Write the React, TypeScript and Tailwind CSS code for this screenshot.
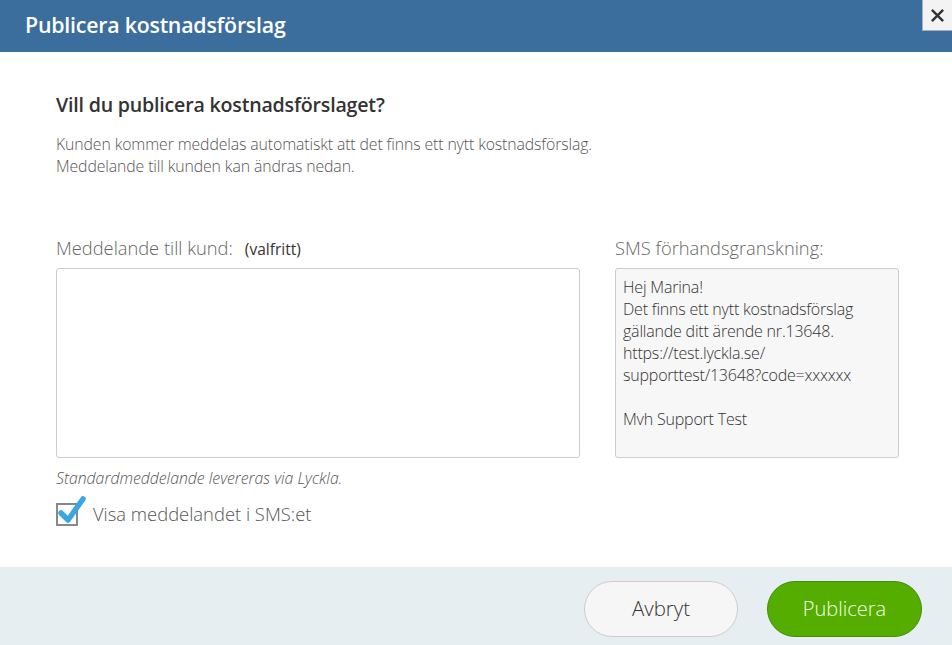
import React from 'react';

const font = { fontFamily: '"Open Sans", "Noto Sans", sans-serif' };

const smsLines = [
  'Hej Marina!',
  'Det finns ett nytt kostnadsförslag',
  'gällande ditt ärende nr.13648.',
  'https://test.lyckla.se/',
  'supporttest/13648?code=xxxxxx',
  '',
  'Mvh Support Test',
];

export default function App() {
  return (
    <div className="w-[952px] h-[645px] bg-white flex flex-col overflow-hidden" style={font}>
      {/* header */}
      <div className="h-[52px] bg-[#3c6e9d] flex items-start justify-between shrink-0">
        <h1 className="pl-[25px] pt-[9px] text-[21.3px] leading-[32px] font-semibold text-white tracking-[-0.2px]">
          Publicera kostnadsförslag
        </h1>
        <button className="w-[30px] h-[31px] bg-[#f3f3f3] border-l border-b border-[#9fb0c0] flex items-center justify-center">
          <svg width="15" height="15" viewBox="0 0 16 16">
            <path d="M2 2 L14 14 M14 2 L2 14" stroke="#333" strokeWidth="2.6" />
          </svg>
        </button>
      </div>

      {/* body */}
      <div className="flex-1 pl-[56px] pr-[50px] pt-[40px]">
        <h2 className="text-[19.6px] font-semibold text-[#333] leading-[26px] tracking-[-0.2px]">
          Vill du publicera kostnadsförslaget?
        </h2>
        <p className="mt-[15px] text-[15.8px] text-[#555] leading-[22px] font-light tracking-[-0.1px]">
          Kunden kommer meddelas automatiskt att det finns ett nytt kostnadsförslag.
          <br />
          Meddelande till kunden kan ändras nedan.
        </p>

        <div className="mt-[59px] flex gap-[35px]">
          <div className="w-[524px] shrink-0">
            <div className="flex items-baseline gap-[12px] h-[24px]">
              <span className="text-[18.3px] font-light text-[#666] leading-[24px]">Meddelande till kund:</span>
              <span className="text-[15.5px] text-[#333] leading-[24px]">(valfritt)</span>
            </div>
            <textarea className="mt-[8px] block w-full h-[190px] border border-[#ccc] rounded-[3px] resize-none outline-none p-2" />
            <p className="mt-[9px] text-[15.8px] italic font-light text-[#555] leading-[22px]">
              Standardmeddelande levereras via Lyckla.
            </p>
            <label className="mt-[13px] flex items-center gap-[15px]">
              <span className="relative w-[22px] h-[23px] border-2 border-[#888] bg-white shrink-0">
                <svg className="absolute left-[0px] top-[-11px]" width="28" height="30" viewBox="0 0 28 30">
                  <path d="M3 19 L10 26 L25 5" stroke="#3ba6e2" strokeWidth="5.5" fill="none" strokeLinecap="round" strokeLinejoin="round" />
                </svg>
              </span>
              <span className="text-[18.4px] font-light text-[#555] leading-[24px]">Visa meddelandet i SMS:et</span>
            </label>
          </div>

          <div className="w-[284px] shrink-0">
            <div className="h-[24px] text-[18.3px] font-light text-[#666] leading-[24px]">SMS förhandsgranskning:</div>
            <div className="mt-[8px] h-[190px] bg-[#f7f7f7] border border-[#ccc] rounded-[3px] px-[7px] pt-[7px] text-[16px] font-light text-[#333] leading-[22px] tracking-[-0.2px]">
              {smsLines.map((l, i) => (
                <div key={i} className="h-[22px]">{l}</div>
              ))}
            </div>
          </div>
        </div>
      </div>

      {/* footer */}
      <div className="h-[78px] bg-[#e7eef2] shrink-0 flex items-center justify-end gap-[29px] pr-[30px] pt-[5px]">
        <button className="w-[154px] h-[56px] rounded-full bg-[#f6f6f6] border border-[#ccc] text-[20.5px] font-light text-[#333]">
          Avbryt
        </button>
        <button className="w-[155px] h-[56px] rounded-full bg-[#55ad00] border border-[#3f8f0a] text-[20px] font-light text-[#f4ffe8]">
          Publicera
        </button>
      </div>
    </div>
  );
}
